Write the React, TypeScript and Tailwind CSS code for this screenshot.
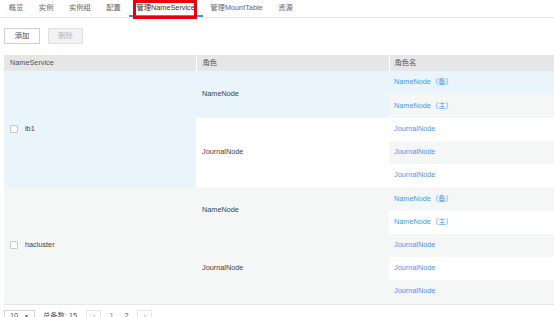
import { ChevronLeft, ChevronRight } from 'lucide-react';

const tabs = ['概览', '实例', '实例组', '配置', '管理NameService', '管理MountTable', '资源'];

type Row = { name: string; bg: string };

const groups = [
  {
    id: 'lb1',
    nsBg: 'bg-[#e9f5fa]',
    roles: [
      {
        role: 'NameNode',
        bg: 'bg-[#e9f5fa]',
        rows: [
          { name: 'NameNode（备）', bg: 'bg-[#e9f5fa]' },
          { name: 'NameNode（主）', bg: 'bg-[#f5f7f7]' },
        ] as Row[],
      },
      {
        role: 'JournalNode',
        bg: 'bg-white',
        rows: [
          { name: 'JournalNode', bg: 'bg-white' },
          { name: 'JournalNode', bg: 'bg-[#f5f7f7]' },
          { name: 'JournalNode', bg: 'bg-white' },
        ] as Row[],
      },
    ],
  },
  {
    id: 'hacluster',
    nsBg: 'bg-[#f5f7f7]',
    roles: [
      {
        role: 'NameNode',
        bg: 'bg-[#f5f7f7]',
        rows: [
          { name: 'NameNode（备）', bg: 'bg-[#f5f7f7]' },
          { name: 'NameNode（主）', bg: 'bg-white' },
        ] as Row[],
      },
      {
        role: 'JournalNode',
        bg: 'bg-[#f5f7f7]',
        rows: [
          { name: 'JournalNode', bg: 'bg-[#f5f7f7]' },
          { name: 'JournalNode', bg: 'bg-white' },
          { name: 'JournalNode', bg: 'bg-[#f5f7f7]' },
        ] as Row[],
      },
    ],
  },
];

// row heights in px, the screenshot alternates 23/24
const heights = [
  'h-[23px]', 'h-[24px]', 'h-[23px]', 'h-[23px]', 'h-[23px]',
  'h-[24px]', 'h-[23px]', 'h-[23px]', 'h-[23px]', 'h-[24px]',
];

const Checkbox = () => (
  <span className="inline-block w-[8px] h-[8px] border border-[#c8c8c8] bg-white rounded-[1px]" />
);

export default function App() {
  let rowIdx = 0;
  return (
    <div
      className="relative w-[554px] h-[317px] overflow-hidden bg-white text-[7.3px] text-[#555]"
      style={{ fontFamily: '"Liberation Sans", "Noto Sans CJK SC", sans-serif' }}
    >
      {/* Tabs */}
      <div className="flex h-[18px] pl-[1px] border-b border-[#e6e6e6]">
        {tabs.map((t, i) => (
          <div
            key={t}
            className={
              'px-[7.75px] pt-[3px] leading-[10px] whitespace-nowrap ' +
              (i === 4 ? 'text-[#333] border-b-2 border-[#3d8ef7]' : 'text-[#666]')
            }
          >
            {t}
          </div>
        ))}
      </div>

      {/* annotation box over active tab */}
      <div className="absolute left-[133px] top-0 w-[64px] h-[19px] border-[3px] border-[#e8000b]" />

      {/* Buttons */}
      <div className="flex gap-2 pl-1 mt-[10px]">
        <button className="w-[36px] h-[16px] border border-[#cfcfcf] bg-white text-[#444] text-[7.3px]">添加</button>
        <button className="w-[35px] h-[16px] border border-[#e0e0e0] bg-[#f2f2f2] text-[#b8b8b8] text-[7.3px]">删除</button>
      </div>

      {/* Table */}
      <div className="pl-1 mt-[11px]">
        <table className="table-fixed border-collapse w-[560px]">
          <colgroup>
            <col className="w-[192px]" />
            <col className="w-[193px]" />
            <col />
          </colgroup>
          <thead>
            <tr className="h-[16px] bg-[#e4e6e7] text-left">
              <th className="font-normal pl-[6px] border-r border-white">NameService</th>
              <th className="font-normal pl-[6px] border-r border-white">角色</th>
              <th className="font-normal pl-[5px]">角色名</th>
            </tr>
          </thead>
          <tbody className="border-b border-[#e6e6e6]">
            {groups.map((g) =>
              g.roles.map((r, ri) =>
                r.rows.map((row, k) => {
                  const h = heights[rowIdx++];
                  return (
                    <tr key={g.id + ri + k} className={h}>
                      {ri === 0 && k === 0 && (
                        <td rowSpan={5} className={'align-middle pl-[6px] ' + g.nsBg}>
                          <div className="flex items-center gap-[7px]">
                            <Checkbox />
                            <span className="text-[#444]">{g.id}</span>
                          </div>
                        </td>
                      )}
                      {k === 0 && (
                        <td rowSpan={r.rows.length} className={'align-middle pl-[6px] text-[#444] ' + r.bg}>
                          {r.role}
                        </td>
                      )}
                      <td className={'pl-[5px] text-[#4b94f6] ' + row.bg}>{row.name}</td>
                    </tr>
                  );
                })
              )
            )}
          </tbody>
        </table>
      </div>

      {/* Pagination */}
      <div className="flex items-center pl-1 mt-[5px] text-[7.3px] text-[#555]">
        <div className="flex items-center justify-between w-[31px] h-[14px] border border-[#d5d5d5] px-[5px]">
          <span>10</span>
          <span className="text-[5px]">▼</span>
        </div>
        <span className="ml-[8px]">总条数: 15</span>
        <div className="flex items-center ml-[9px] gap-[6px]">
          <span className="flex items-center justify-center w-[15px] h-[14px] border border-[#e6e6e6] text-[#999]">
            <ChevronLeft size={8} />
          </span>
          <span className="w-[9px] text-center text-[#3d8ef7]">1</span>
          <span className="w-[9px] text-center">2</span>
          <span className="flex items-center justify-center w-[15px] h-[14px] border border-[#e6e6e6] text-[#999]">
            <ChevronRight size={8} />
          </span>
        </div>
      </div>
    </div>
  );
}
